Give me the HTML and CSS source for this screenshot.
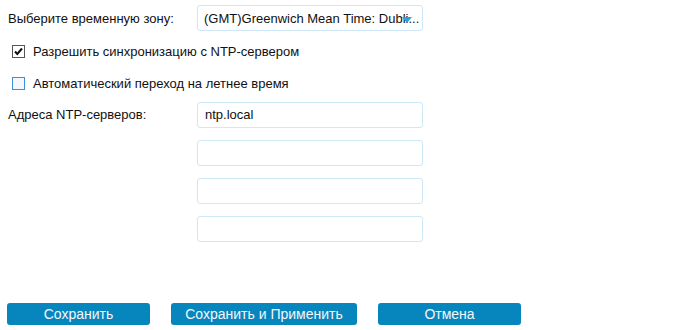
FILE: index.html
```html
<!DOCTYPE html>
<html lang="ru">
<head>
    <meta charset="UTF-8">
    <title>Время</title>
    <link rel="stylesheet" href="styles.css">
</head>
<body>
    <div class="form">
        <div class="row">
            <label class="label">Выберите временную зону:</label>
            <div class="select">
                <span class="select-text">(GMT)Greenwich Mean Time: Dubli...</span>
                <span class="arrow"></span>
            </div>
        </div>

        <label class="check-row">
            <span class="box checked">
                <svg width="11" height="11" viewBox="0 0 11 11"><path d="M2 5.5 L4.3 8 L9 2.5" fill="none" stroke="#111" stroke-width="2"/></svg>
            </span>
            Разрешить синхронизацию с NTP-сервером
        </label>

        <label class="check-row">
            <span class="box"></span>
            Автоматический переход на летнее время
        </label>

        <div class="row ntp-row">
            <label class="label">Адреса NTP-серверов:</label>
            <div class="inputs">
                <div class="input">ntp.local</div>
                <div class="input"></div>
                <div class="input"></div>
                <div class="input"></div>
            </div>
        </div>
    </div>

    <div class="buttons">
        <button class="btn">Сохранить</button>
        <button class="btn wide">Сохранить и Применить</button>
        <button class="btn">Отмена</button>
    </div>
</body>
</html>
```

FILE: styles.css
```css
body {
    margin: 0;
    font-family: "Liberation Sans", Arial, sans-serif;
    font-size: 13px;
    color: #111;
    background: #fff;
}

.form {
    padding: 5px 0 0 8px;
}

.row {
    display: flex;
    align-items: center;
}

.label {
    width: 189px;
}

.select {
    position: relative;
    width: 226px;
    height: 26px;
    box-sizing: border-box;
    border: 1px solid #cde8f6;
    border-radius: 3px;
    display: flex;
    align-items: center;
    padding: 0 2px 0 6px;
}

.select-text {
    white-space: nowrap;
    color: #111;
}

.arrow {
    position: absolute;
    right: 10px;
    top: 11px;
    width: 0;
    height: 0;
    border-left: 5px solid transparent;
    border-right: 5px solid transparent;
    border-top: 6px solid #2aa3dc;
}

.check-row {
    display: flex;
    align-items: center;
    gap: 8px;
    padding-left: 4px;
    margin-top: 8px;
    height: 24px;
}

.box {
    width: 11px;
    height: 11px;
    border: 1px solid #3d8fd4;
    background: #f4f8fc;
    display: flex;
    align-items: center;
    justify-content: center;
}

.box.checked {
    border-color: #555;
    background: #fff;
}

.ntp-row {
    align-items: flex-start;
    margin-top: 7px;
}

.ntp-row .label {
    line-height: 26px;
}

.inputs {
    display: flex;
    flex-direction: column;
    gap: 12px;
}

.input {
    width: 226px;
    height: 26px;
    box-sizing: border-box;
    border: 1px solid #cde8f6;
    border-radius: 3px;
    padding: 0 7px;
    line-height: 24px;
    color: #111;
}

.buttons {
    display: flex;
    gap: 21px;
    padding-left: 7px;
    margin-top: 61px;
}

.btn {
    width: 143px;
    height: 22px;
    border: none;
    border-radius: 3px;
    background: #0786bd;
    color: #f2f8fb;
    font-family: "Liberation Sans", Arial, sans-serif;
    font-size: 14px;
    padding: 0;
}

.btn.wide {
    width: 186px;
}
```
